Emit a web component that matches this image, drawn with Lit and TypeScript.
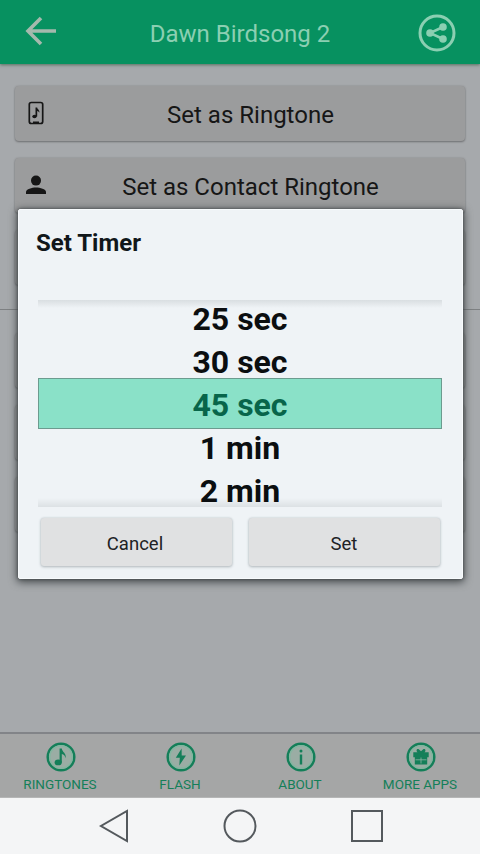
import { LitElement, html, css, svg } from "lit";
import { customElement, state } from "lit/decorators.js";
import { classMap } from "lit/directives/class-map.js";

const glyphs = {
  note: svg`<ellipse cx="12.200" cy="20.400" rx="3.600" ry="2.900" fill="currentColor"/><path d="M13.600 20.500V6.500h2.200c.3 3.700 5 4.700 3.700 9.700-.5-2.500-1.600-3.700-3.700-4.200v8.500z" fill="currentColor"/>`,
  bolt: svg`<path d="M15.600 6.500 9.800 15.800h4l-.5 7.700 6.700-10h-4.300z" fill="currentColor"/>`,
  info: svg`<circle cx="15" cy="9" r="1.500" fill="currentColor"/><path d="M13.800 12.500h2.400v10h-2.400z" fill="currentColor"/>`,
  gift: svg`<path d="M7.300 10.200h4.200C9.500 8.500 11 6 13 7.400l2 1.900 2-1.900c2-1.400 3.500 1.100 1.500 2.800h4.200v5H7.300zM8.800 14.800h12.400v7.700H8.800z" fill="currentColor"/><path d="M15 15.500v6M9.500 17.800h11" stroke="#8eb4a4" stroke-width=".8"/>`,
};

@customElement("app-root")
export class AppRoot extends LitElement {
  @state() private times = ["25 sec", "30 sec", "45 sec", "1 min", "2 min"];
  @state() private selected = 2;

  static styles = css`
    * { box-sizing: border-box; }
    :host {
      display: flex; flex-direction: column; position: relative;
      width: 480px; height: 854px; overflow: hidden;
      font-family: Roboto, "Liberation Sans", sans-serif;
      background: #a6a9ac; color: #161616;
    }
    svg { display: block; flex: none; }
    header {
      height: 64px; flex: none; display: flex; align-items: center;
      justify-content: space-between; padding: 3px 24px 0 25px;
      background: #079160; color: #8bcfb2; box-shadow: 0 1px 3px #55705f;
    }
    h1 { margin: 0; padding-left: 5px; font-size: 24px; font-weight: 400; line-height: 28px; }
    .back { color: #a5b9ad; margin-top: -6px; }
    .share { margin-top: -2px; }
    main { flex: 1; padding: 22px 15px 0; display: flex; flex-direction: column; gap: 16px; }
    .option {
      height: 55px; margin-bottom: 1px; flex: none; display: flex; align-items: center; padding: 2px 9px 0;
      border-radius: 4px; background: #9b9c9d;
      box-shadow: 0 1px 2px #707274, 0 0 2px #8b8d8f;
      font-size: 24px; line-height: 28px;
    }
    .option svg { margin-top: -3px; }
    .option span { flex: 1; text-align: center; padding-right: 3px; }
    .rule { height: 1px; flex: none; margin: 7px -15px; background: #7d8082; }
    .tabs {
      height: 66px; flex: none; display: grid; grid-template-columns: repeat(4, 1fr);
      border-top: 2px solid #828488; border-bottom: 1px solid #b5b6b6;
      background: #a5a6a6; color: #147f59;
    }
    .tab { display: flex; flex-direction: column; align-items: center; padding-top: 8px; gap: 4px; font-size: 13.500px; line-height: 16px; white-space: nowrap; }
    .tab svg { margin-left: 1px; }
    .system {
      height: 56px; flex: none; display: flex; justify-content: center; align-items: center;
      gap: 93px; padding-left: 1px; background: #f4f5f6;
    }
    .dialog {
      position: absolute; left: 18px; top: 209px; width: 445px; height: 370px;
      padding: 0 20px 0 19px; background: #eff3f6; border: 1px solid #f8fbfd;
      border-radius: 2px; box-shadow: 0 2px 9px 1px #414648, 0 0 3px #454a4c;
      display: flex; flex-direction: column;
    }
    h2 { margin: 19px 0 43px -2px; font-size: 24px; line-height: 28px; font-weight: 700; color: #11171a; }
    .picker {
      height: 207px; flex: none; display: flex; flex-direction: column;
      padding-top: 1px; overflow: hidden;
      background: linear-gradient(#d9dee1, #eff3f6 8px, #eff3f6 198px, #dce1e4);
    }
    .time { height: 43px; flex: none; display: flex; align-items: center; justify-content: center; font-size: 32px; line-height: 30px; font-weight: 700; color: #0b0e10; padding-top: 2px; }
    .time:first-child { height: 38px; padding: 0 0 2px; }
    .time:last-child { height: 38px; padding-top: 7px; }
    .selected { height: 51px; margin: -4px 0; background: #8ae1c8; border: 1px solid #6c9b8f; color: #08654a; }
    .actions { display: grid; grid-template-columns: 191px 191px; gap: 17px; margin: 11px 0 0 3px; }
    button {
      height: 48px; padding: 4px 3px 0 0; border: 0; border-radius: 3px;
      font: 400 18.500px/22px Roboto, sans-serif; color: #202224; background: #e0e1e2;
      box-shadow: 0 1px 3px #b3babe, 0 0 2px #c5cdd1;
    }
    button:last-child { padding-right: 1px; }
  `;

  private tab(label: string, glyph: unknown) {
    return html`<div class="tab">
      <svg width="30" height="30" viewBox="0 0 30 30">
        <circle cx="15" cy="15" r="13.300" fill="#9aada4" stroke="currentColor" stroke-width="2.500" />
        <circle cx="15" cy="15" r="11.300" fill="none" stroke="#84b5a0" stroke-width="1.500" />
        ${glyph}
      </svg>
      <span>${label}</span>
    </div>`;
  }

  render() {
    return html`
      <header>
        <svg class="back" width="32" height="30" viewBox="0 0 32 30" fill="none" stroke="currentColor" stroke-width="3.600"><path d="M31 15H3M16 2 3 15l13 13" /></svg>
        <h1>Dawn Birdsong 2</h1>
        <svg class="share" width="38" height="38" viewBox="0 0 38 38" fill="none" stroke="currentColor">
          <circle cx="19" cy="19" r="17" stroke-width="3" />
          <path d="M25 13 12 19l13 6" stroke-width="2.500" />
          <g fill="currentColor" stroke="none"><circle cx="25" cy="13" r="3.800" /><circle cx="12" cy="19" r="3.800" /><circle cx="25" cy="25" r="3.800" /></g>
        </svg>
      </header>
      <main>
        <div class="option">
          <svg width="24" height="24" viewBox="0 0 24 24"><rect x="5.300" y="1.500" width="13.400" height="21" rx="2" fill="none" stroke="currentColor" stroke-width="1.700" /><path d="M9 21.500h6" stroke="currentColor" stroke-width="2" /><ellipse cx="10.500" cy="15.500" rx="2.200" ry="1.700" fill="currentColor" /><path d="M11.500 15.500V6.500h1.700c.1 2 3 2.500 2 5.300-.5-1.300-1-1.500-2-1.700v5.400z" fill="currentColor" /></svg>
          <span>Set as Ringtone</span>
        </div>
        <div class="option">
          <svg width="24" height="24" viewBox="0 0 24 24" fill="currentColor"><circle cx="12" cy="7.600" r="5" /><path d="M2 21v-2c0-3 6-4.600 10-4.600S22 16 22 19v2z" /></svg>
          <span>Set as Contact Ringtone</span>
        </div>
        <div class="option"></div>
        <div class="rule"></div>
        <div class="option"></div>
        <div class="option"></div>
        <div class="option"></div>
      </main>
      <nav class="tabs">
        ${this.tab("RINGTONES", glyphs.note)} ${this.tab("FLASH", glyphs.bolt)}
        ${this.tab("ABOUT", glyphs.info)} ${this.tab("MORE APPS", glyphs.gift)}
      </nav>
      <footer class="system">
        <svg width="32" height="34" viewBox="0 0 32 34" fill="none" stroke="#54595d" stroke-width="2"><path d="M29 2v30L3 17z" /></svg>
        <svg width="34" height="34" viewBox="0 0 34 34" fill="none" stroke="#54595d" stroke-width="2"><circle cx="17" cy="17" r="15.500" /></svg>
        <svg width="34" height="34" viewBox="0 0 34 34" fill="none" stroke="#54595d" stroke-width="2"><path d="M2 2h30v30H2z" /></svg>
      </footer>
      <section class="dialog">
        <h2>Set Timer</h2>
        <div class="picker">
          ${this.times.map((t, i) => html`<div class=${classMap({ time: true, selected: i === this.selected })} @click=${() => (this.selected = i)}>${t}</div>`)}
        </div>
        <div class="actions"><button>Cancel</button><button>Set</button></div>
      </section>
    `;
  }
}
